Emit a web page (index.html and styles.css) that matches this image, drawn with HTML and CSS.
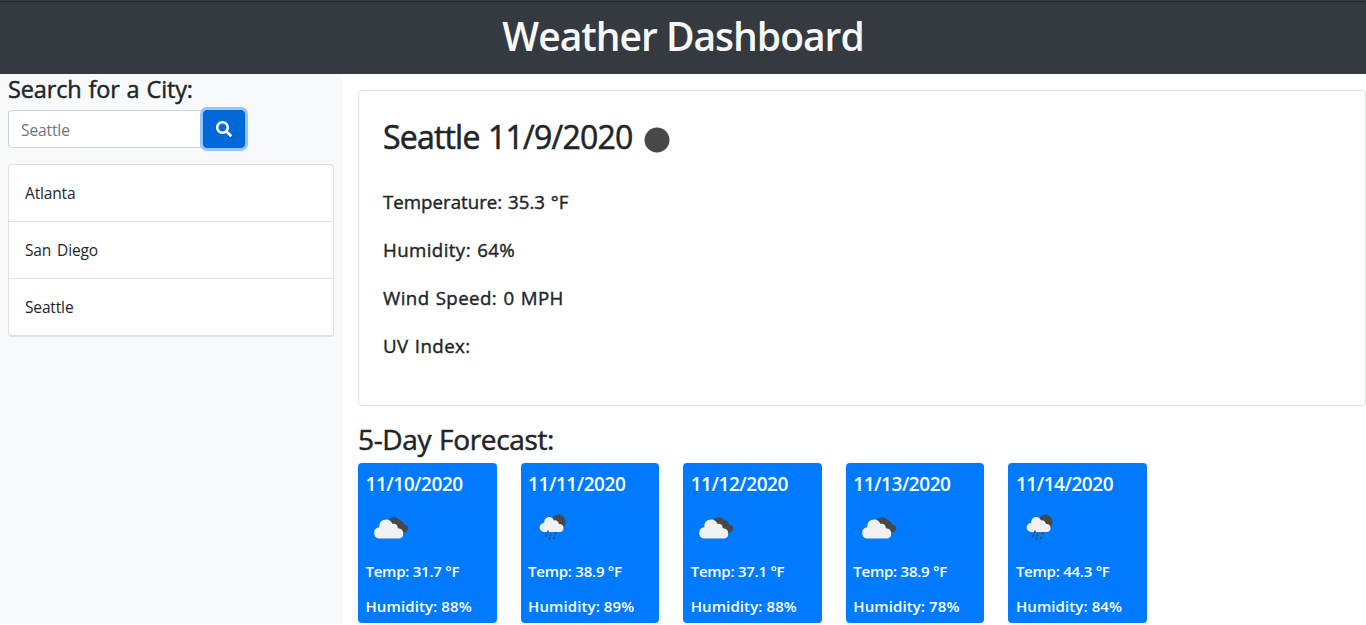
FILE: index.html
```html
<!DOCTYPE html>
<html lang="en">
<head>
<meta charset="utf-8">
<title>Weather Dashboard</title>
<link rel="stylesheet" href="styles.css">
</head>
<body>
<svg class="defs" aria-hidden="true">
  <symbol id="clouds" viewBox="0 0 36 24">
    <path fill="#484849" d="M14 8A7 7 0 0 1 26.800 4.500Q30 4 31 8.500Q36 9 35.300 13Q34 17 30 16.500L20 14Z"/>
    <path fill="#f2f2f2" d="M6 22.500A5.700 5.700 0 0 1 6.300 11.200C6 6 9.500 3.300 13.500 3.500Q17.500 3.700 19.500 8Q24 7 25 12.300Q30.200 12.500 30.200 17.500T25.500 22.500Z"/>
  </symbol>
  <symbol id="rain" viewBox="0 0 28 28">
    <circle fill="#484849" cx="19.500" cy="8" r="7.200"/>
    <path fill="#f2f2f2" d="M5 18A4.500 4.500 0 0 1 5.200 9C5 5 7.500 3 10.500 3Q13.500 3 15 6.500Q18.500 5.700 20 10Q24.500 10 24.500 14T20.500 18Z"/>
    <path stroke="#484849" stroke-width="1.600" fill="none" d="M9 16.500v2M16.500 18.200v2.500M7.800 20.500l-1.300 2.300M12 20l-1.300 2.300M15.500 23l-1.200 2.300M10.700 23.700l-.8 1.600"/>
  </symbol>
</svg>
<header class="header"><h1 class="title">Weather Dashboard</h1></header>
<div class="layout">
  <aside class="sidebar">
    <h4 class="search-title">Search for a City:</h4>
    <div class="search">
      <input class="search-input" type="text" placeholder="Seattle">
      <button class="search-button" aria-label="Search">
        <svg class="search-icon" viewBox="0 0 512 512"><path fill="currentColor" d="M505 442.700L405.300 343c-4.500-4.500-10.600-7-17-7H372c27.600-35.300 44-79.700 44-128C416 93.100 322.900 0 208 0S0 93.100 0 208s93.100 208 208 208c48.300 0 92.700-16.400 128-44v16.300c0 6.400 2.500 12.500 7 17l99.700 99.700c9.400 9.400 24.600 9.400 33.900 0l28.300-28.300c9.400-9.400 9.400-24.600.1-34zM208 336c-70.700 0-128-57.200-128-128 0-70.700 57.200-128 128-128 70.700 0 128 57.200 128 128 0 70.700-57.200 128-128 128z"/></svg>
      </button>
    </div>
    <ul class="cities">
      <li class="city">Atlanta</li>
      <li class="city">San Diego</li>
      <li class="city">Seattle</li>
    </ul>
  </aside>
  <main class="main">
    <section class="current">
      <h2 class="current-title"><span>Seattle 11/9/2020</span><svg class="current-icon" viewBox="0 0 26 26"><circle cx="13" cy="13" r="12.500" fill="#484849"/></svg></h2>
      <p class="stat temperature">Temperature: 35.3 °F</p>
      <p class="stat">Humidity: 64%</p>
      <p class="stat">Wind Speed: 0 MPH</p>
      <p class="stat">UV Index:</p>
    </section>
    <h3 class="forecast-title">5-Day Forecast:</h3>
    <section class="forecast">
      <article class="day"><h5 class="date">11/10/2020</h5><svg class="clouds"><use href="#clouds"/></svg><p class="reading">Temp: 31.7 °F</p><p class="reading humidity">Humidity: 88%</p></article>
      <article class="day"><h5 class="date">11/11/2020</h5><svg class="rain"><use href="#rain"/></svg><p class="reading">Temp: 38.9 °F</p><p class="reading humidity">Humidity: 89%</p></article>
      <article class="day"><h5 class="date">11/12/2020</h5><svg class="clouds"><use href="#clouds"/></svg><p class="reading">Temp: 37.1 °F</p><p class="reading humidity">Humidity: 88%</p></article>
      <article class="day"><h5 class="date">11/13/2020</h5><svg class="clouds"><use href="#clouds"/></svg><p class="reading">Temp: 38.9 °F</p><p class="reading humidity">Humidity: 78%</p></article>
      <article class="day"><h5 class="date">11/14/2020</h5><svg class="rain"><use href="#rain"/></svg><p class="reading">Temp: 44.3 °F</p><p class="reading humidity">Humidity: 84%</p></article>
    </section>
  </main>
</div>
</body>
</html>
```
FILE: styles.css
```css
* { box-sizing: border-box; }
body { margin: 0; height: 625px; overflow: hidden; background: #fff; color: #212529; font-family: "Open Sans", "Noto Sans", sans-serif; font-size: 16px; }
h1, h2, h3, h4, h5, p, ul { margin: 0; padding: 0; font-weight: 500; }
.defs { display: none; }
.header { height: 74px; padding-top: 12px; background: linear-gradient(#343a40 1px, #25282b 1px, #25282b 2px, #343a40 2px); color: #f8f9fa; text-align: center; }
.title { font-size: 39px; font-weight: 600; line-height: 48px; letter-spacing: -1px; }
.layout { display: flex; height: 550px; }
.sidebar { width: 342px; padding: 1px 8px 0; background: #f8f9fa; }
.search-title { font-size: 23.500px; line-height: 29px; letter-spacing: -.15px; word-spacing: 1px; -webkit-text-stroke: .45px currentColor; }
.search { display: flex; gap: 1px; margin-top: 6px; height: 38px; }
.search-input { width: 194px; height: 38px; padding: 2px 12px 0; border: 1px solid #ced4da; border-right: 0; border-radius: 4px 0 0 4px; background: #fff; font: 15.500px "Open Sans", sans-serif; letter-spacing: -.1px; }
.search-input::placeholder { color: #6c757d; opacity: 1; }
.search-button { display: flex; align-items: center; justify-content: center; width: 42px; height: 38px; padding: 0; border: 1px solid #0062cc; border-radius: 4px; background: #0069d9; color: #fff; box-shadow: 0 0 0 3px #94c5fd; }
.search-icon { width: 16px; height: 16px; }
.cities { margin-top: 16px; border: 1px solid #dfe1e5; border-bottom-width: 2px; border-radius: 4px; background: #fff; list-style: none; }
.city { height: 57px; padding: 16px 16px 0; font-size: 15.500px; line-height: 24px; letter-spacing: -.15px; word-spacing: 2px; border-bottom: 1px solid #dfe1e5; }
.city:last-child { border-bottom: 0; height: 56px; }
.main { flex: 1; padding: 16px 0 0 16px; }
.current { height: 316px; padding: 26px 24px 0; border: 1px solid #dee2e6; border-radius: 4px; }
.current-title { display: flex; align-items: center; height: 40px; margin-bottom: 33px; font-size: 32px; line-height: 40px; letter-spacing: -.8px; word-spacing: 1px; -webkit-text-stroke: .55px currentColor; }
.current-icon { width: 26px; height: 26px; margin: 6px 0 0 12px; -webkit-text-stroke: 0; }
.stat { height: 24px; margin-bottom: 24px; font-size: 18.700px; line-height: 24px; letter-spacing: .4px; word-spacing: 1px; -webkit-text-stroke: .4px currentColor; }
.temperature { letter-spacing: 0; }
.forecast-title { margin-top: 17px; height: 40px; font-size: 28px; line-height: 33px; letter-spacing: -.35px; word-spacing: 1px; -webkit-text-stroke: .5px currentColor; }
.forecast { display: grid; grid-template-columns: repeat(5, 138.600px); gap: 24px; }
.day { height: 160px; padding: 9px 8px 0 7.500px; border-radius: 4px; background: #007bff; color: #fff; }
.date { height: 24px; font-size: 19px; font-weight: 600; line-height: 24px; letter-spacing: -.45px; }
.clouds { display: block; width: 36px; height: 24px; margin: 20px 0 19px 7.500px; }
.rain { display: block; width: 28px; height: 28px; margin: 18px 0 17px 10.500px; }
.reading { height: 24px; margin-bottom: 11px; font-size: 15px; font-weight: 600; line-height: 24px; letter-spacing: -.25px; }
.humidity { letter-spacing: .1px; }
```
